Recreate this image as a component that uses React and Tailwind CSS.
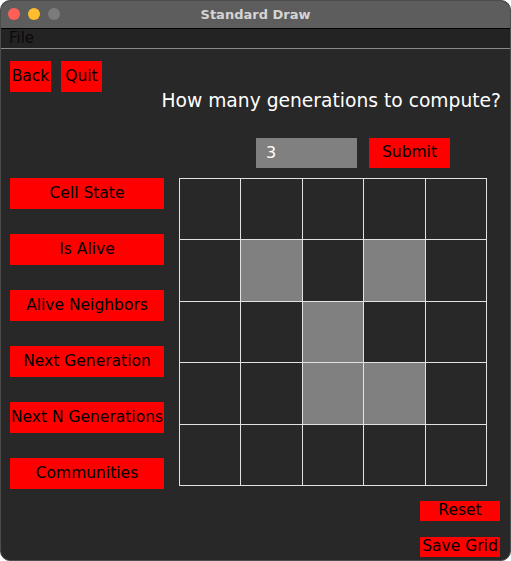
import React from 'react';

const font = { fontFamily: '"DejaVu Sans", "Liberation Sans", sans-serif' };

const alive = ['1-1', '1-3', '2-2', '3-2', '3-3'];

const RedButton = ({ label, className = '' }) => (
  <button
    className={`bg-[#ff0000] text-black flex items-center justify-center whitespace-nowrap leading-none overflow-hidden ${className}`}
  >
    {label}
  </button>
);

const App = () => {
  const sideButtons = [
    'Cell State',
    'Is Alive',
    'Alive Neighbors',
    'Next Generation',
    'Next N Generations',
    'Communities',
  ];

  return (
    <div className="w-[511px] h-[561px] bg-white" style={font}>
      <div className="w-full h-full rounded-[10px] overflow-hidden border border-[#4c4c4c] bg-[#282828] flex flex-col">
        {/* Title bar */}
        <div className="relative h-[27px] bg-[#5d5d5d] flex items-center justify-center shrink-0">
          <div className="absolute left-[7px] top-[7px] flex gap-[8px]">
            <span className="w-[12px] h-[12px] rounded-full bg-[#fe5f57]" />
            <span className="w-[12px] h-[12px] rounded-full bg-[#febc2e]" />
            <span className="w-[12px] h-[12px] rounded-full bg-[#7b7b7b]" />
          </div>
          <span className="text-[13px] font-bold text-[#d4d4d4]">Standard Draw</span>
        </div>

        {/* Menu bar */}
        <div className="h-[21px] bg-[#232323] border-t border-black border-b border-b-[#8a8a8a] flex items-center px-[8px] shrink-0">
          <span className="text-[15px] text-[#0a0a0a]">File</span>
        </div>

        {/* Content */}
        <div className="flex-1 flex flex-col px-[9px]">
          <div className="flex gap-[10px] mt-[12px]">
            <RedButton label="Back" className="w-[41px] h-[31px] text-[15.5px]" />
            <RedButton label="Quit" className="w-[41px] h-[31px] text-[15.5px]" />
          </div>

          <div className="flex justify-end -mt-[5px] pr-[0px]">
            <span className="text-[18.7px] text-white">How many generations to compute?</span>
          </div>

          <div className="flex items-center gap-[12px] mt-[23px] ml-[246px]">
            <div className="w-[101px] h-[30px] bg-[#808080] flex items-center px-[10px] text-[16px] text-white">
              3
            </div>
            <RedButton label="Submit" className="w-[81px] h-[30px] text-[15.5px]" />
          </div>

          <div className="flex mt-[10px]">
            <div className="flex flex-col gap-[25px] w-[154px]">
              {sideButtons.map((b) => (
                <RedButton key={b} label={b} className="w-[154px] h-[31px] text-[15.5px]" />
              ))}
            </div>
            <div className="ml-[15px] grid grid-cols-5 gap-px p-px bg-[#e2e2e2] w-[308px] h-[308px]">
              {Array.from({ length: 25 }).map((_, i) => {
                const key = `${Math.floor(i / 5)}-${i % 5}`;
                return (
                  <div
                    key={key}
                    className={alive.includes(key) ? 'bg-[#808080]' : 'bg-[#282828]'}
                  />
                );
              })}
            </div>
          </div>

          <div className="flex flex-col items-end gap-[16px] mt-[12px] pr-[1px]">
            <RedButton label="Reset" className="w-[80px] h-[20px] text-[15.5px]" />
            <RedButton label="Save Grid" className="w-[80px] h-[20px] text-[15.5px]" />
          </div>
        </div>
      </div>
    </div>
  );
};

export default App;
